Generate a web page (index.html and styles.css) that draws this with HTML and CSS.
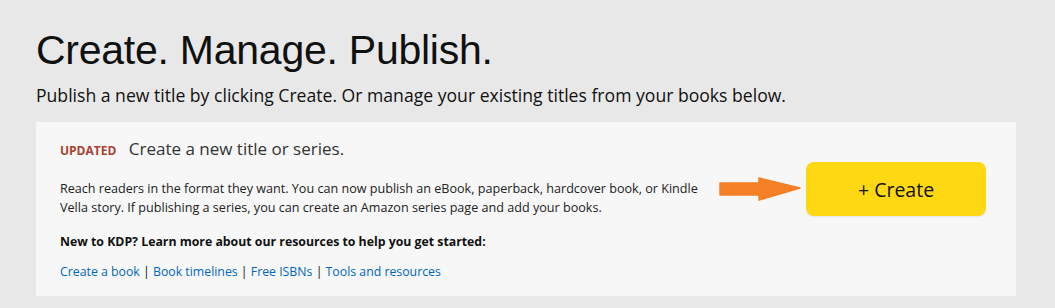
FILE: index.html
```html
<!DOCTYPE html>
<html lang="en"><head>
<meta charset="utf-8">
<title>KDP Bookshelf</title>
<link rel="stylesheet" href="styles.css">
</head>
<body>
<div class="wrap">
  <h1 class="title">Create. Manage. Publish.</h1>
  <p class="lead">Publish a new title by clicking Create. Or manage your existing titles from your books below.</p>

  <div class="card">
    <div class="card-text">
      <div class="card-head"><span class="badge">UPDATED</span> Create a new title or series.</div>
      <p class="desc">Reach readers in the format they want. You can now publish an eBook, paperback, hardcover book, or Kindle Vella story. If publishing a series, you can create an Amazon series page and add your books.</p>
      <p class="newkdp">New to KDP? Learn more about our resources to help you get started:</p>
      <p class="links"><a href="#">Create a book</a> | <a href="#">Book timelines</a> | <a href="#">Free ISBNs</a> | <a href="#">Tools and resources</a></p>
    </div>
    <div class="card-action">
      <svg class="arrow" width="82" height="24" viewBox="0 0 82 24">
        <path d="M1 6 H40 V1 L81 11 L40 23 V18 H1 Z" fill="#f58025" stroke="#f58025" stroke-linejoin="round" stroke-width="1.5"/>
      </svg>
      <button class="create">+ Create</button>
    </div>
  </div>
</div>
</body>
</html>
```
FILE: styles.css
```css
*,*::before,*::after {box-sizing: border-box;}
body {
  margin: 0;
  background: #e8e8e8;
  font-family: "Open Sans", "Noto Sans", Arial, sans-serif;
  color: #111;
}
.wrap {
  padding: 26px 39px 13px 36px;
}
.title {
  font-family: "Liberation Sans", Arial, sans-serif;
  font-weight: normal;
  font-size: 41px;
  letter-spacing: -0.25px;
  line-height: 48px;
  margin: 0;
  color: #0f1111;
}
.lead {
  font-size: 17.6px;
  margin: 9px 0 15px;
  line-height: 24px;
}
.card {
  background: #f7f7f7;
  display: flex;
  padding: 15px 30px 15px 24px;
}
.card-text {
  width: 680px;
}
.card-head {
  font-size: 17px;
  line-height: 24px;
  color: #333;
}
.badge {
  color: #a94232;
  font-weight: bold;
  font-size: 12px;
  margin-right: 8px;
}
.desc {
  font-size: 12.6px;
  line-height: 19px;
  margin: 16px 0 15px;
  color: #222;
}
.newkdp {
  font-size: 12.3px;
  font-weight: bold;
  margin: 0 0 11px;
  line-height: 19px;
}
.links {
  font-size: 12.3px;
  margin: 0;
  line-height: 19px;
}
.links a {
  color: #0066c0;
  text-decoration: none;
}
.card-action {
  flex: 1;
  display: flex;
  align-items: center;
  justify-content: flex-end;
  align-self: flex-start;
  margin-top: 25px;
  gap: 5px;
}
.arrow {
  display: block;
}
.create {
  width: 180px;
  height: 54px;
  background: #ffd814;
  border: none;
  border-radius: 8px;
  font-family: inherit;
  font-size: 19.5px;
  color: #0f1111;
  box-shadow: 0 1px 2px rgba(0,0,0,0.08);
}
```
